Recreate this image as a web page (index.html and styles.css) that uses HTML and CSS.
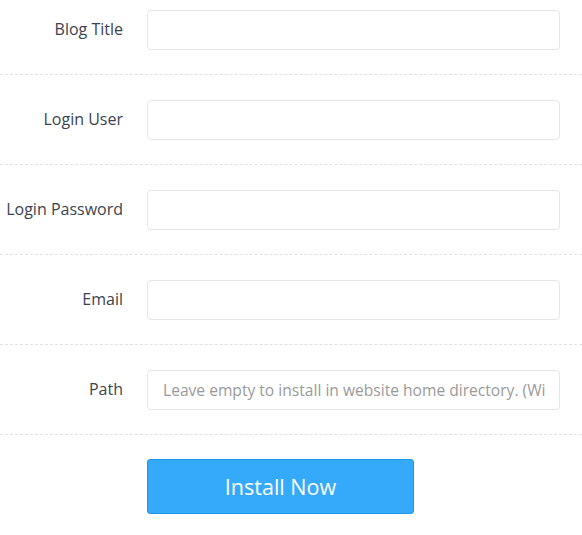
FILE: index.html
```
<!DOCTYPE html>
<html>
<head>
<meta charset="utf-8">
<link rel="stylesheet" href="styles.css">
</head>
<body>
<form class="form">
  <div class="row first">
    <label class="label">Blog Title</label>
    <input class="input" type="text">
  </div>
  <div class="row">
    <label class="label">Login User</label>
    <input class="input" type="text">
  </div>
  <div class="row">
    <label class="label">Login Password</label>
    <input class="input" type="text">
  </div>
  <div class="row">
    <label class="label">Email</label>
    <input class="input" type="text">
  </div>
  <div class="row">
    <label class="label">Path</label>
    <input class="input" type="text" placeholder="Leave empty to install in website home directory. (Wi">
  </div>
  <div class="actions">
    <button class="btn" type="button">Install Now</button>
  </div>
</form>
</body>
</html>
```
FILE: styles.css
```
html, body {
  margin: 0;
  padding: 0;
  background: #fff;
  font-family: "Open Sans", sans-serif;
}
.form {
  margin: 0;
}
.row {
  display: flex;
  align-items: center;
  padding: 25px 0 24px;
  border-bottom: 1px dashed #e2e2e2;
}
.row.first {
  padding-top: 10px;
}
.label {
  width: 123px;
  text-align: right;
  font-size: 16px;
  line-height: 20px;
  color: #3c4350;
  margin-right: 24px;
  margin-bottom: 2px;
  white-space: nowrap;
}
.input {
  box-sizing: border-box;
  width: 413px;
  height: 40px;
  border: 1px solid #e3e6ea;
  border-radius: 4px;
  padding: 0 12px 0 15px;
  font-family: "Open Sans", sans-serif;
  font-size: 15.6px;
  color: #444;
  outline: none;
  background: #fff;
}
.input::placeholder {
  color: #9a9a9a;
}
.actions {
  padding: 24px 0 0 147px;
}
.btn {
  box-sizing: border-box;
  width: 267px;
  height: 55px;
  background: #35aafb;
  border: 1px solid #1f95e6;
  border-radius: 3px;
  color: #fff;
  font-family: "Open Sans", sans-serif;
  font-size: 21.5px;
  cursor: pointer;
}
```
